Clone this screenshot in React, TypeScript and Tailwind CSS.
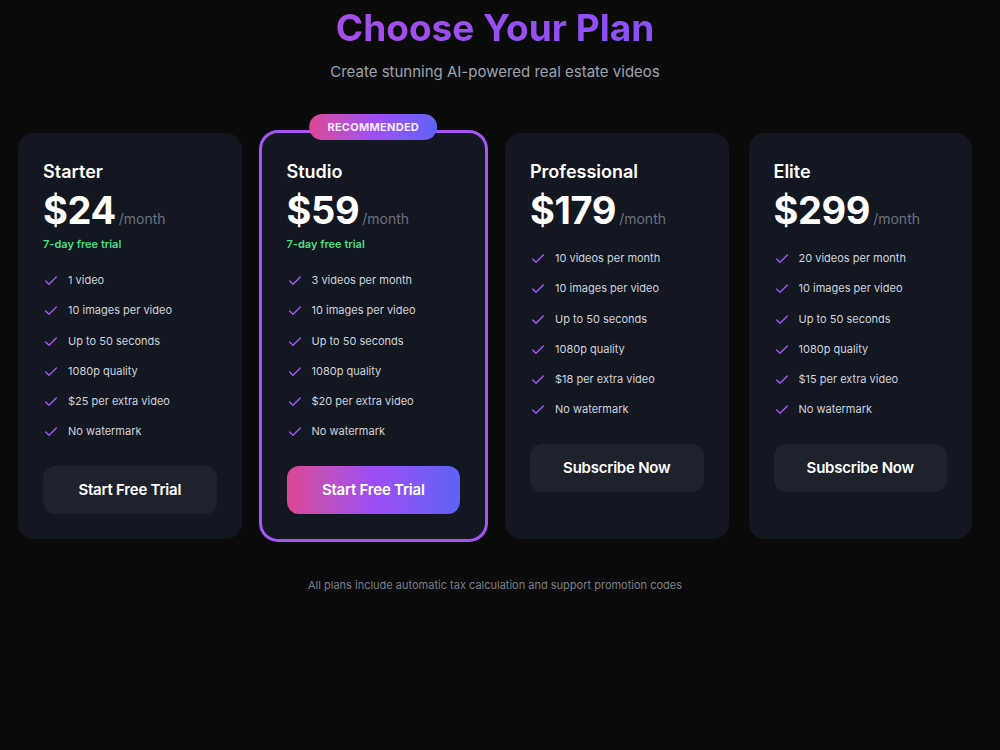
import { Check } from 'lucide-react';

type Plan = {
  name: string;
  price: string;
  trial?: boolean;
  features: string[];
  cta: string;
  featured?: boolean;
};

const plans: Plan[] = [
  {
    name: 'Starter',
    price: '$24',
    trial: true,
    features: ['1 video', '10 images per video', 'Up to 50 seconds', '1080p quality', '$25 per extra video', 'No watermark'],
    cta: 'Start Free Trial',
  },
  {
    name: 'Studio',
    price: '$59',
    trial: true,
    featured: true,
    features: ['3 videos per month', '10 images per video', 'Up to 50 seconds', '1080p quality', '$20 per extra video', 'No watermark'],
    cta: 'Start Free Trial',
  },
  {
    name: 'Professional',
    price: '$179',
    features: ['10 videos per month', '10 images per video', 'Up to 50 seconds', '1080p quality', '$18 per extra video', 'No watermark'],
    cta: 'Subscribe Now',
  },
  {
    name: 'Elite',
    price: '$299',
    features: ['20 videos per month', '10 images per video', 'Up to 50 seconds', '1080p quality', '$15 per extra video', 'No watermark'],
    cta: 'Subscribe Now',
  },
];

function PlanCard({ plan }: { plan: Plan }) {
  return (
    <div
      className={`relative rounded-2xl bg-[#131722] p-[25px] ${
        plan.featured ? 'ring-[3px] ring-[#a855f7]' : ''
      }`}
    >
      {plan.featured && (
        <div className="absolute -top-[19px] left-1/2 -translate-x-1/2 rounded-full bg-linear-to-r from-[#db4595] via-[#a04cf4] to-[#5b63f6] px-[18px] py-[5px] text-[11px] font-bold leading-4 tracking-wide whitespace-nowrap text-[#f3eaff]">
          RECOMMENDED
        </div>
      )}

      <h3 className="text-lg leading-7 font-semibold text-white">{plan.name}</h3>
      <div className="mt-1 flex items-baseline gap-[3px]">
        <span className="text-[38px] leading-10 font-bold tracking-[-0.01em] text-white">{plan.price}</span>
        <span className="text-sm text-[#6b7280]">/month</span>
      </div>
      {plan.trial && <p className="mt-1.5 text-[11px] leading-4 font-semibold text-[#4ade80]">7-day free trial</p>}

      <ul className="mt-5 flex flex-col gap-[14.3px]">
        {plan.features.map((f) => (
          <li key={f} className="flex h-4 items-center gap-[9px] text-[11px] leading-4 text-[#cfd3da]">
            <Check className="relative top-px h-4 w-4 shrink-0 text-[#a855f7]" strokeWidth={2} />
            {f}
          </li>
        ))}
      </ul>

      <button
        className={`mt-[27px] w-full rounded-xl py-3 text-[15px] leading-6 font-semibold tracking-[-0.015em] text-white ${
          plan.featured ? 'bg-linear-to-r from-[#db4595] via-[#9d4cf5] to-[#5b63f6]' : 'bg-[#1e222d]'
        }`}
      >
        {plan.cta}
      </button>
    </div>
  );
}

export default function App() {
  return (
    <div className="min-h-screen bg-[#0b0b0b] font-['Inter',sans-serif]">
      <div className="w-[990px] px-[18px] pt-2">
        <h1 className="text-center text-[37px] leading-10 font-bold">
          <span className="bg-linear-to-r from-[#a54eea] to-[#8b50f7] bg-clip-text text-transparent">
            Choose Your Plan
          </span>
        </h1>
        <p className="mt-3 text-center text-[15px] leading-6 text-[#9ca3af]">
          Create stunning AI-powered real estate videos
        </p>

        <div className="mt-[49px] grid grid-cols-4 gap-5">
          {plans.map((p) => (
            <PlanCard key={p.name} plan={p} />
          ))}
        </div>

        <p className="mt-[38px] text-center text-[11px] leading-4 text-[#7b7f87]">
          All plans include automatic tax calculation and support promotion codes
        </p>
      </div>
    </div>
  );
}
